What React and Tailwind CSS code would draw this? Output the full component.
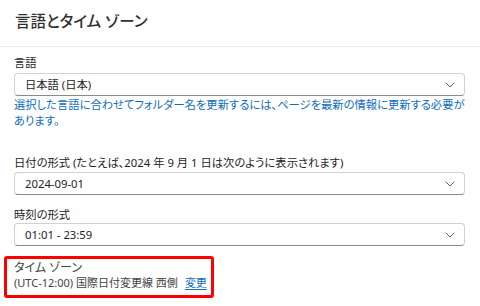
import React from "react";

const font = "font-['Noto_Sans','Noto_Sans_CJK_JP',sans-serif] [font-feature-settings:'palt']";

const Chevron = () => (
  <svg width="10" height="6" viewBox="0 0 10 6" fill="none">
    <path d="M1 1l4 4 4-4" stroke="#616161" strokeWidth="1" strokeLinecap="round" strokeLinejoin="round" />
  </svg>
);

const Select = ({ value, className = "" }) => (
  <div
    className={`flex items-center justify-between h-[23px] pl-[10px] pr-[9px] rounded-[4px] border border-[#d1d1d1] border-b-[#8a8a8a] bg-white ${className}`}
  >
    <span className="text-[11.3px] text-[#242424] leading-none">{value}</span>
    <Chevron />
  </div>
);

const Label = ({ children, className = "" }) => (
  <p className={`h-[14px] text-[11.3px] leading-[14px] text-[#242424] whitespace-nowrap ${className}`}>{children}</p>
);

export default function App() {
  return (
    <div className={`w-[480px] h-[306px] bg-white flex overflow-hidden ${font}`}>
      <div className="flex-1 flex flex-col">
        <div className="h-[47px] border-b border-[#edebe9] flex items-center pl-[15px] pb-[2px]">
          <h1 className="text-[15.5px] font-medium text-[#323130] leading-none">言語とタイム ゾーン</h1>
        </div>

        <div className="flex flex-col pl-[14px] pr-[16px] pt-[9px]">
          <Label>言語</Label>
          <Select value="日本語 (日本)" className="mt-[3px]" />
          <div className="text-[11.3px] leading-[16px] text-[#0f6cbd] whitespace-nowrap mt-[1px]">
            <p className="h-[16px]">選択した言語に合わせてフォルダー名を更新するには、ページを最新の情報に更新する必要が</p>
            <p className="h-[16px]">あります。</p>
          </div>

          <Label className="mt-[27px]">日付の形式 (たとえば、2024 年 9 月 1 日は次のように表示されます)</Label>
          <Select value="2024-09-01" className="mt-[2px]" />

          <Label className="mt-[13px]">時刻の形式</Label>
          <Select value="01:01 - 23:59" className="mt-[1px]" />

          <div className="-ml-[10px] mt-[10px] w-[210px] h-[42px] border-[3px] border-[#ff0000] rounded-[3px] pl-[7px] pt-[1px]">
            <p className="h-[16px] text-[12px] leading-[16px] text-[#424242]">タイム ゾーン</p>
            <p className="h-[14px] text-[11px] leading-[14px] text-[#424242] whitespace-nowrap">
              (UTC-12:00) 国際日付変更線 西側
              <span className="ml-[7px] text-[#0f6cbd] underline underline-offset-2">変更</span>
            </p>
          </div>
        </div>
      </div>

      <div className="w-[2px] bg-[#d4d4d4] flex flex-col">
        <div className="h-[18px] bg-[#c4c4c4]" />
      </div>
    </div>
  );
}
